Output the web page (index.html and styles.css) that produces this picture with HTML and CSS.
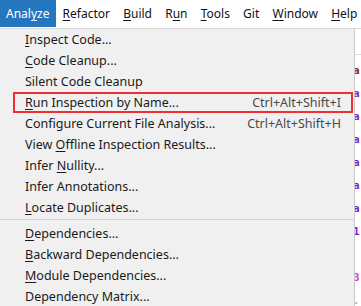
FILE: index.html
```html
<!DOCTYPE html>
<html>
<head>
<meta charset="utf-8">
<link rel="stylesheet" href="styles.css">
</head>
<body>
<div class="menubar">
  <span class="mi active">Anal<u>y</u>ze</span>
  <span class="mi"><u>R</u>efactor</span>
  <span class="mi"><u>B</u>uild</span>
  <span class="mi">R<u>u</u>n</span>
  <span class="mi"><u>T</u>ools</span>
  <span class="mi">Git</span>
  <span class="mi"><u>W</u>indow</span>
  <span class="mi"><u>H</u>elp</span>
</div>
<div class="main">
  <div class="dropdown">
    <div class="row"><span><u>I</u>nspect Code...</span></div>
    <div class="row"><span><u>C</u>ode Cleanup...</span></div>
    <div class="row"><span>Silent Code Cleanup</span></div>
    <div class="row boxed"><span><u>R</u>un Inspection by Name...</span><span class="sc">Ctrl+Alt+Shift+I</span></div>
    <div class="row"><span>Configure Current File Analysis...</span><span class="sc">Ctrl+Alt+Shift+H</span></div>
    <div class="row"><span>View <u>O</u>ffline Inspection Results...</span></div>
    <div class="row"><span>Infer <u>N</u>ullity...</span></div>
    <div class="row"><span>Infer Annotations...</span></div>
    <div class="row"><span><u>L</u>ocate Duplicates...</span></div>
    <div class="sep"></div>
    <div class="row"><span><u>D</u>ependencies...</span></div>
    <div class="row"><span><u>B</u>ackward Dependencies...</span></div>
    <div class="row"><span><u>M</u>odule Dependencies...</span></div>
    <div class="row"><span>Dependency Matrix...</span></div>
  </div>
  <div class="editor">
    <div class="tabbar"></div>
    <div class="code">
      <div class="ln brown">a</div>
      <div class="ln purple">a</div>
      <div class="ln purple">a</div>
      <div class="ln purple">a</div>
      <div class="ln purple">a</div>
      <div class="ln purple">a</div>
      <div class="ln purple">a</div>
      <div class="ln purple">1</div>
      <div class="ln"></div>
      <div class="ln pink">3:</div>
      <div class="ln orange">.</div>
    </div>
  </div>
</div>
</body>
</html>
```
FILE: styles.css
```css
* { box-sizing: border-box; }
html, body { margin: 0; padding: 0; }
body {
  width: 361px;
  height: 306px;
  overflow: hidden;
  background: #ffffff;
  font-family: "Noto Sans", "Noto Sans CJK SC", sans-serif;
  font-size: 12.5px;
  color: #1a1a1a;
}
u { text-decoration: underline; text-underline-offset: 2px; }
.menubar {
  display: flex;
  height: 29px;
  border-bottom: 1px solid #dadada;
  background: #ffffff;
  white-space: nowrap;
  overflow: hidden;
}
.mi {
  height: 27px;
  line-height: 27px;
  padding: 0 6.6px;
  font-size: 12px;
  color: #111;
  flex: none;
}
.mi.active {
  background: #2675bf;
  color: #ffffff;
  padding: 0 6px 0 6px;
  width: 56px;
}
.main {
  display: flex;
  height: 277px;
}
.dropdown {
  width: 355px;
  flex: none;
  background: #f0f0f0;
  border-right: 1px solid #c9c9c9;
  box-shadow: 1px 0 0 #e6e6e6;
}
.row {
  height: 21px;
  display: flex;
  align-items: center;
  justify-content: space-between;
  padding: 0 13px 0 25px;
  white-space: nowrap;
}
.row.boxed {
  margin-left: 13px;
  margin-right: 1px;
  padding-left: 10px;
  padding-right: 10px;
  border: 2px solid #ee3035;
}
.sc { color: #4a4a4a; }
.sep {
  height: 4px;
  border-top: 1px solid #d4d4d4;
  margin-top: 1px;
}
.editor {
  flex: 1;
  overflow: hidden;
  background: #fff;
}
.tabbar {
  height: 26px;
  border-bottom: 1px solid #dcdcdc;
}
.code {
  padding-top: 4px;
  margin-left: -2px;
  font-family: "DejaVu Sans Mono", monospace;
  font-size: 11px;
  font-weight: bold;
}
.ln { height: 23px; line-height: 23px; }
.brown { color: #8a2a10; }
.purple { color: #7a1fd0; }
.pink { color: #d63fc4; }
.orange { color: #f0a070; }
```
